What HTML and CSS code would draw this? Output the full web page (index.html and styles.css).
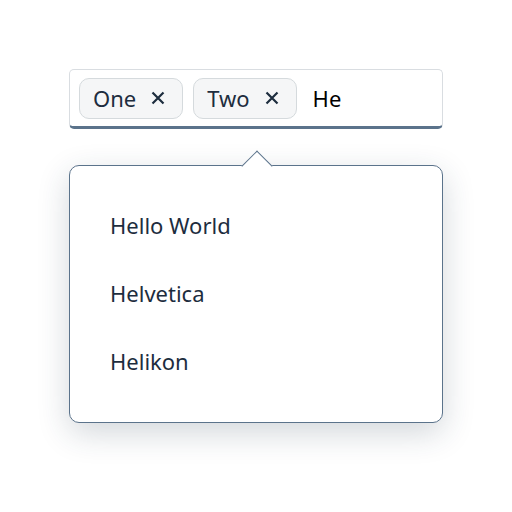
FILE: index.html
```html
<!DOCTYPE html>
<html lang="en">
  <head>
    <meta charset="UTF-8" />
    <title>Multi Input</title>
    <link rel="stylesheet" href="styles.css">
  </head>
  <body>
    <div class="field">
      <div class="multi-input">
        <span class="token">One
          <svg class="token-close" width="14" height="14" viewBox="0 0 14 14"><path d="M1.5 1.5 L12.5 12.5 M12.5 1.5 L1.5 12.5" /></svg>
        </span>
        <span class="token">Two
          <svg class="token-close" width="14" height="14" viewBox="0 0 14 14"><path d="M1.5 1.5 L12.5 12.5 M12.5 1.5 L1.5 12.5" /></svg>
        </span>
        <span class="typed">He</span>
      </div>
      <div class="popover">
        <ul class="suggestions">
          <li>Hello World</li>
          <li>Helvetica</li>
          <li>Helikon</li>
        </ul>
      </div>
    </div>
  </body>
</html>
```
FILE: styles.css
```css
html,
body {
  height: 100%;
}

body {
  margin: 0;
  background: #fff;
  font-family: "Noto Sans", Arial, sans-serif;
  color: #1d2d3e;
}

.field {
  width: 374px;
  padding: 69px 0 0 69px;
}

.multi-input {
  display: flex;
  align-items: center;
  gap: 10px;
  height: 60px;
  padding: 0 9px;
  border: 1px solid #d9dde1;
  border-bottom: 3px solid #5b738b;
  border-radius: 5px;
  box-sizing: border-box;
}

.token {
  display: flex;
  align-items: center;
  gap: 15px;
  height: 41px;
  padding: 0 17px 0 13px;
  box-sizing: border-box;
  border: 1px solid #d5dadd;
  border-radius: 10px;
  background: #f5f6f7;
  font-size: 22px;
}

.token-close {
  stroke: #1d2d3e;
  stroke-width: 2.2;
  fill: none;
}

.typed {
  margin-left: 6px;
  font-size: 22px;
  color: #000;
}

.popover {
  position: relative;
  margin-top: 36px;
  height: 258px;
  border: 1px solid #5b738b;
  border-radius: 10px;
  box-sizing: border-box;
  background: #fff;
  box-shadow: 0 10px 32px rgba(34, 54, 73, 0.2);
}

.popover::before {
  content: "";
  position: absolute;
  left: 176px;
  top: -11px;
  width: 21px;
  height: 21px;
  background: #fff;
  border-top: 1px solid #5b738b;
  border-left: 1px solid #5b738b;
  transform: rotate(45deg);
}

.suggestions {
  list-style: none;
  margin: 0;
  padding: 25px 0 0;
}

.suggestions li {
  height: 68px;
  line-height: 68px;
  padding-left: 40px;
  font-size: 22px;
}
```
